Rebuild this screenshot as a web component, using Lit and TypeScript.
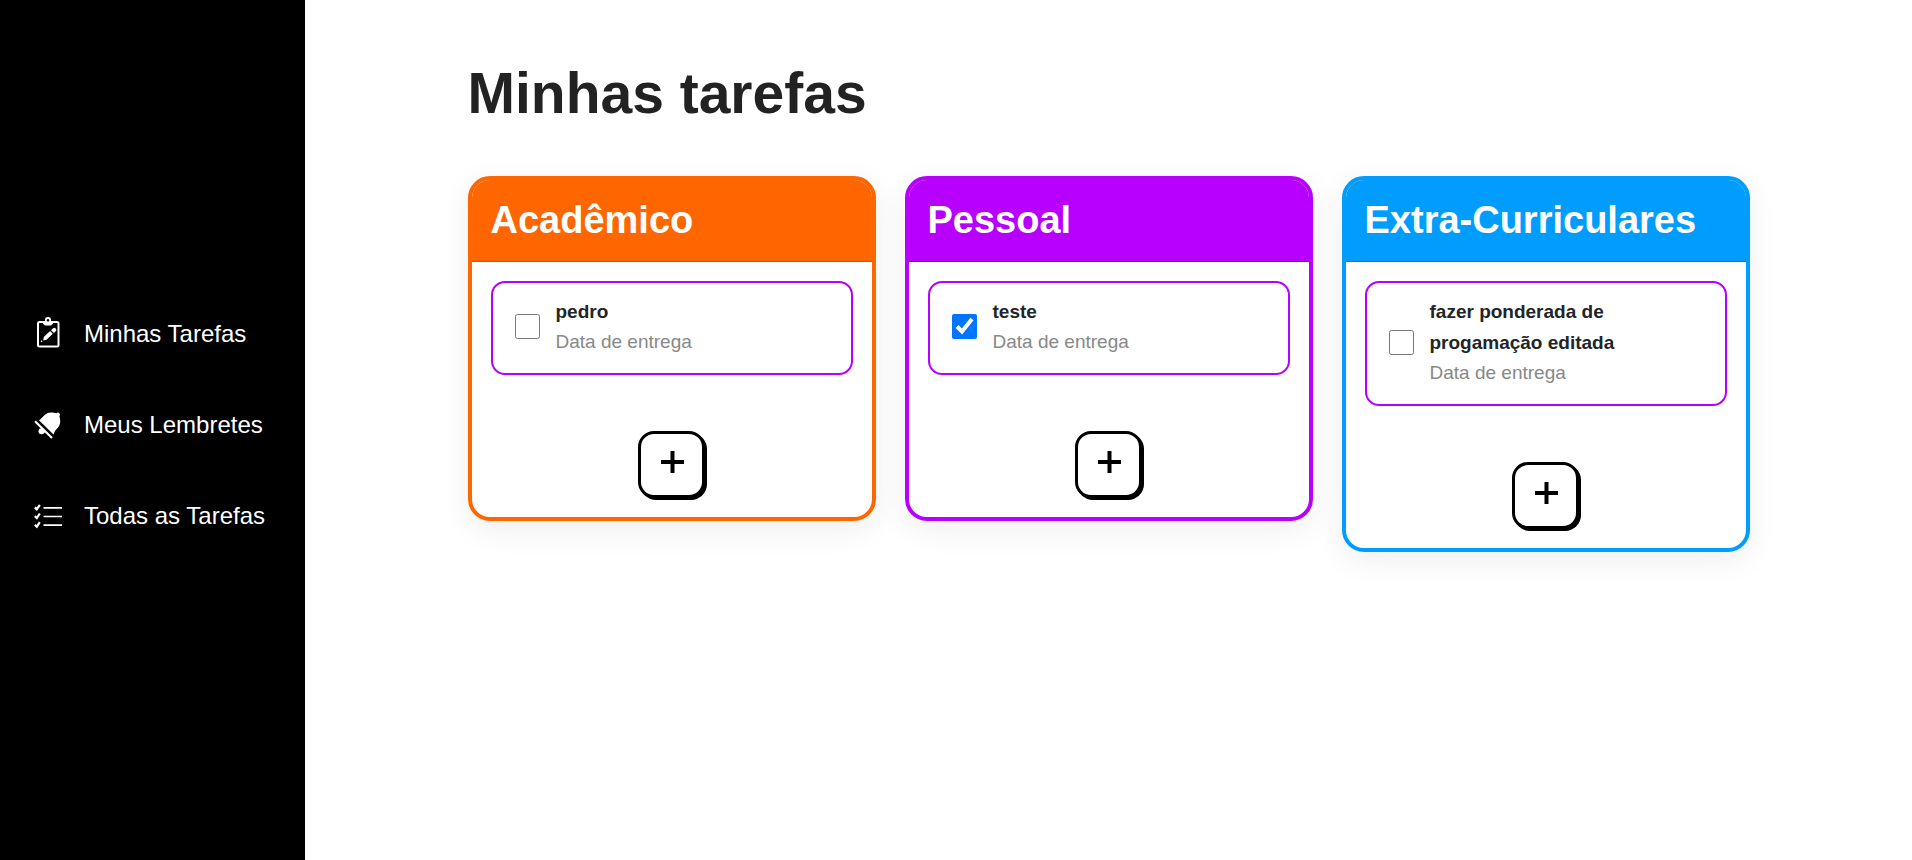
import { LitElement, html, css, svg } from "lit";
import { customElement, property, state } from "lit/decorators.js";

interface Task {
  name: string;
  done: boolean;
}

interface Category {
  title: string;
  tone: string;
  tasks: Task[];
}

const clipboardIcon = svg`
  <rect x="6" y="6" width="20.5" height="24.500" rx="1.5" fill="none" stroke="currentColor" stroke-width="2" />
  <path fill="currentColor" d="M11 5h10v2.500l-2 2h-6l-2-2z" />
  <circle cx="16" cy="4.200" r="2.200" fill="#000" stroke="currentColor" stroke-width="1.800" />
  <path fill="currentColor" d="M11.800 21l6.200-6 2.800 2.800-6.200 6-3.400.6zM19 14.200l1.800-1.800a2 2 0 0 1 2.900 2.900l-1.800 1.800zM9 24.200l1.800 1.400-2 .6z" />`;

const bellIcon = svg`
  <path fill="currentColor" d="M7 13.300C11 10.500 13 5.400 19 5.400c2.200 0 3.600.3 5.400.9a2 2 0 1 1 3 2.900c1 3.600 1.600 7.800-1.400 11.300-1.800 2-3.400 3.300-4.500 7z" />
  <path stroke="currentColor" stroke-width="2.200" d="M3 14.200L20 31" />
  <circle cx="9.500" cy="24.200" r="3" fill="currentColor" />
  <path fill="currentColor" d="M9 20.500l4.500 4.500-3 2z" />`;

const checklistIcon = svg`
  <path stroke="currentColor" stroke-width="1.700" d="M11.500 9.800h18.500M11.500 18.500h18.500M11.500 27.200h18.500" />
  <path fill="none" stroke="currentColor" stroke-width="2.200" d="M2.800 9.400l2 1.900 3-4.500M2.800 18.100l2 1.900 3-4.500M2.800 26.800l2 1.900 3-4.500" />`;

@customElement("side-menu")
class SideMenu extends LitElement {
  static styles = css`
    :host {
      display: flex;
      flex-direction: column;
      justify-content: center;
      box-sizing: border-box;
      background: #000;
      padding: 0 24px 14px 32px;
    }
    .menu {
      display: flex;
      flex-direction: column;
      gap: 55px;
      list-style: none;
      margin: 0;
      padding: 0;
    }
    .link {
      display: flex;
      align-items: center;
      gap: 20px;
      color: #fff;
      font-size: 24px;
      line-height: 32px;
      text-decoration: none;
      white-space: nowrap;
    }
    .icon {
      width: 32px;
      height: 32px;
      flex: none;
    }
    .label {
      padding-top: 4px;
    }
  `;

  private items = [
    { label: "Minhas Tarefas", icon: clipboardIcon },
    { label: "Meus Lembretes", icon: bellIcon },
    { label: "Todas as Tarefas", icon: checklistIcon },
  ];

  render() {
    return html`<nav>
      <ul class="menu">
        ${this.items.map(
          (item) => html`<li>
            <a class="link" href="#">
              <svg class="icon" viewBox="0 0 32 32" aria-hidden="true">${item.icon}</svg>
              <span class="label">${item.label}</span>
            </a>
          </li>`
        )}
      </ul>
    </nav>`;
  }
}

@customElement("task-card")
class TaskCard extends LitElement {
  static styles = css`
    :host {
      display: block;
    }
    .card {
      border: 4px solid var(--tone);
      border-radius: 22px;
      background: #fff;
      box-shadow: 0 8px 32px rgba(0, 0, 0, 0.07);
    }
    .orange {
      --tone: #ff6600;
    }
    .purple {
      --tone: #b700ff;
    }
    .blue {
      --tone: #009dff;
    }
    .title {
      margin: 0;
      padding: 17px 19px 18px;
      border-bottom: 1px solid rgba(0, 0, 0, 0.175);
      border-radius: 18px 18px 0 0;
      background: var(--tone);
      color: #fff;
      font-size: 38px;
      line-height: 46px;
      font-weight: 700;
    }
    .body {
      display: flex;
      flex-direction: column;
      padding: 19px;
      gap: 19px;
    }
    .task {
      display: flex;
      align-items: center;
      gap: 16px;
      padding: 13px 22px 16px;
      border: 2px solid #b700ff;
      border-radius: 14px;
    }
    .check {
      flex: none;
      width: 25px;
      height: 25px;
      margin: 0;
      accent-color: #0075ff;
    }
    .text {
      display: flex;
      flex-direction: column;
      flex: 1;
      max-width: 240px;
      font-size: 19px;
      line-height: 31px;
    }
    .name {
      color: #212529;
      font-weight: 700;
    }
    .due {
      color: #888;
      line-height: 30px;
    }
    .add {
      align-self: center;
      width: 67px;
      height: 67px;
      margin-top: 37px;
      padding: 0 0 5px;
      border: 3px solid #000;
      border-radius: 16px;
      background: #fff;
      box-shadow: 2px 2px 0 #000;
      color: #000;
    }
    .plus {
      display: block;
      width: 24px;
      height: 24px;
      margin: 0 auto;
    }
  `;

  @property({ attribute: false }) category!: Category;

  render() {
    const { title, tone, tasks } = this.category;
    return html`<section class="card ${tone}">
      <h2 class="title">${title}</h2>
      <div class="body">
        ${tasks.map(
          (task) => html`<label class="task">
            <input class="check" type="checkbox" .checked=${task.done} />
            <span class="text">
              <span class="name">${task.name}</span>
              <span class="due">Data de entrega</span>
            </span>
          </label>`
        )}
        <button class="add" type="button" aria-label="Adicionar tarefa">
          <svg class="plus" viewBox="0 0 24 24" aria-hidden="true">
            <path stroke="currentColor" stroke-width="4" d="M1 12h23M12.500 1v22" />
          </svg>
        </button>
      </div>
    </section>`;
  }
}

@customElement("app-root")
class AppRoot extends LitElement {
  static styles = css`
    :host {
      display: grid;
      grid-template-columns: 305px 1fr;
      min-height: 100vh;
      background: #fff;
      font-family: "Liberation Sans", Arial, sans-serif;
    }
    .main {
      padding: 58px 48px;
    }
    .content {
      max-width: 1282px;
      margin: 0 auto;
    }
    .heading {
      margin: 0 0 48px;
      color: #222;
      font-size: 57px;
      line-height: 70px;
      font-weight: 700;
    }
    .board {
      display: grid;
      grid-template-columns: repeat(3, minmax(0, 1fr));
      align-items: start;
      gap: 29px;
    }
  `;

  @state() private categories: Category[] = [
    { title: "Acadêmico", tone: "orange", tasks: [{ name: "pedro", done: false }] },
    { title: "Pessoal", tone: "purple", tasks: [{ name: "teste", done: true }] },
    {
      title: "Extra-Curriculares",
      tone: "blue",
      tasks: [{ name: "fazer ponderada de progamação editada", done: false }],
    },
  ];

  render() {
    return html`
      <side-menu></side-menu>
      <main class="main">
        <div class="content">
          <h1 class="heading">Minhas tarefas</h1>
          <div class="board">
            ${this.categories.map((category) => html`<task-card .category=${category}></task-card>`)}
          </div>
        </div>
      </main>
    `;
  }
}
